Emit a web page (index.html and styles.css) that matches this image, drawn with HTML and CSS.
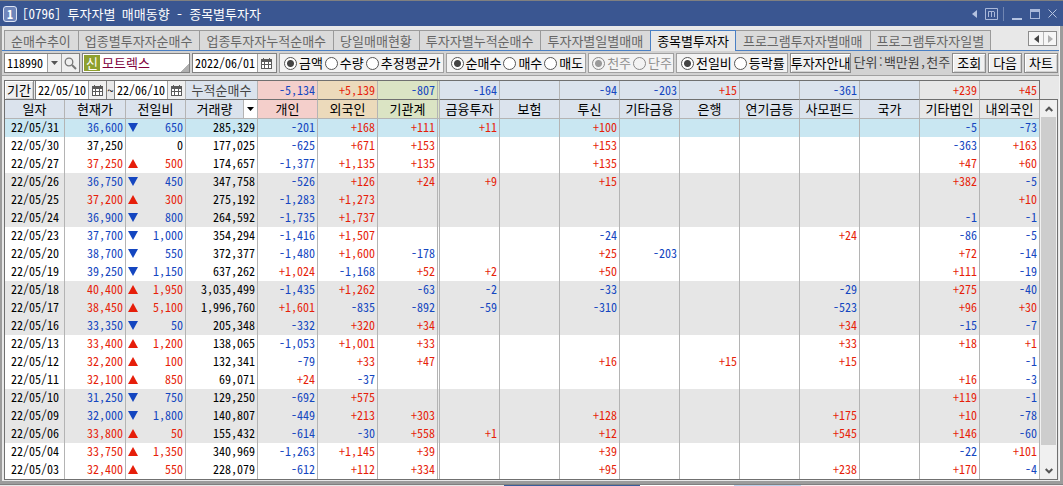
FILE: index.html
```html
<!DOCTYPE html>
<html lang="ko">
<head>
<meta charset="utf-8">
<title>[0796] 투자자별 매매동향</title>
<link rel="stylesheet" href="styles.css">
</head>
<body>
<svg class="defs" aria-hidden="true">
  <symbol id="calendar" viewBox="0 0 11 11"><path fill="#5a5a5a" d="M0 1h11v10H0z"/><path fill="#fff" d="M1 4h2v2H1zM4 4h3v2H4zM8 4h2v2H8zM1 7h2v3H1zM4 7h3v3H4zM8 7h2v3H8z"/><path fill="#5a5a5a" d="M2 0h1v1H2zM8 0h1v1H8z"/></symbol>
</svg>
<div class="window">
  <header class="titlebar">
    <span class="badge">1</span>
    <h1 class="title">[0796] 투자자별 매매동향 - 종목별투자자</h1>
    <div class="window-controls">
      <button class="wbtn" aria-label="이전"><svg width="5" height="8" viewBox="0 0 5 8"><path fill="#b5c3e0" d="M5 0v8L0 4z"/></svg></button>
      <button class="wbtn" aria-label="메뉴"><svg width="13" height="12" viewBox="0 0 13 12" fill="none" stroke="#a9b8da"><path d="M.5.5h12v11H.5zM3.500 9V3.500h5.500l.5.500v5M6.500 4v5"/></svg></button>
      <span class="wsep"></span>
      <button class="wbtn" aria-label="최소화"><svg width="10" height="12" viewBox="0 0 10 12"><path fill="#b5c3e0" d="M0 10h10v2H0z"/></svg></button>
      <button class="wbtn" aria-label="최대화"><svg width="10" height="10" viewBox="0 0 10 10"><path fill="#a9b8da" d="M0 0h10v10H0zM1 3v6h8V3z" fill-rule="evenodd"/></svg></button>
      <button class="wbtn" aria-label="닫기"><svg width="9" height="9" viewBox="0 0 9 9"><path stroke="#b5c3e0" d="M.5.5l8 8M8.500.5l-8 8"/></svg></button>
    </div>
  </header>
  <main class="content">
    <nav class="tabs">
      <button class="tab">순매수추이</button><button class="tab">업종별투자자순매수</button><button class="tab">업종투자자누적순매수</button><button class="tab">당일매매현황</button><button class="tab">투자자별누적순매수</button><button class="tab">투자자별일별매매</button><button class="tab tab-active">종목별투자자</button><button class="tab">프로그램투자자별매매</button><button class="tab">프로그램투자자일별</button>
      <div class="tab-scroll">
        <button class="scroll-btn" aria-label="왼쪽"><svg width="5" height="8" viewBox="0 0 5 8"><path fill="#444" d="M5 0v8L0 4z"/></svg></button>
        <button class="scroll-btn" aria-label="오른쪽"><svg width="5" height="8" viewBox="0 0 5 8"><path fill="#b0b0b0" d="M0 0v8l5-4z"/></svg></button>
      </div>
    </nav>
    <section class="toolbar">
      <div class="field">
        <input class="text code" value="118990" aria-label="종목코드">
        <button class="icon-btn drop" aria-label="목록"><svg width="7" height="4" viewBox="0 0 7 4"><path fill="#555" d="M0 0h7L3.500 4z"/></svg></button>
        <button class="icon-btn find" aria-label="검색"><svg width="13" height="13" viewBox="0 0 13 13" fill="none" stroke="#777"><circle cx="5" cy="5" r="3.800" stroke-width="1.300"/><path stroke-width="2" d="M8 8l4 4"/></svg></button>
      </div>
      <div class="field stock">
        <span class="mark">신</span>
        <input class="text name" value="모트렉스" aria-label="종목명">
      </div>
      <div class="field">
        <input class="text date" value="2022/06/01" aria-label="기준일">
        <button class="icon-btn cal" aria-label="달력"><svg width="11" height="11"><use href="#calendar"/></svg></button>
      </div>
      <fieldset class="group">
        <label><input type="radio" name="unit" checked>금액</label><label><input type="radio" name="unit">수량</label><label><input type="radio" name="unit">추정평균가</label>
      </fieldset>
      <fieldset class="group">
        <label><input type="radio" name="side" checked>순매수</label><label><input type="radio" name="side">매수</label><label><input type="radio" name="side">매도</label>
      </fieldset>
      <fieldset class="group group-lot" disabled>
        <label><input type="radio" name="lot" checked>천주</label><label><input type="radio" name="lot">단주</label>
      </fieldset>
      <fieldset class="group">
        <label><input type="radio" name="diff" checked>전일비</label><label><input type="radio" name="diff">등락률</label>
      </fieldset>
      <button class="btn guide">투자자안내</button>
      <span class="unit">단위:백만원,천주</span>
      <button class="btn">조회</button>
      <button class="btn">다음</button>
      <button class="btn">차트</button>
    </section>
    <section class="grid">
      <table class="table">
        <colgroup><col class="c-date"><col class="c-price"><col class="c-diff"><col class="c-volume"><col><col><col class="c-inst"><col><col><col><col><col><col><col><col><col><col></colgroup>
        <thead>
          <tr class="summary">
            <td colspan="3" class="period-cell">
              <div class="period">
                <button class="btn range">기간</button>
                <div class="field"><input class="text short" value="22/05/10" aria-label="시작일"><button class="icon-btn cal" aria-label="달력"><svg width="11" height="11"><use href="#calendar"/></svg></button></div>
                <span class="tilde">~</span>
                <div class="field"><input class="text short" value="22/06/10" aria-label="종료일"><button class="icon-btn cal" aria-label="달력"><svg width="11" height="11"><use href="#calendar"/></svg></button></div>
              </div>
            </td>
            <th class="total" scope="row">누적순매수</th>
            <td class="person down">-5,134</td><td class="foreign up">+5,139</td><td class="inst down">-807</td><td class="down">-164</td><td></td><td class="down">-94</td><td class="down">-203</td><td class="up">+15</td><td></td><td class="down">-361</td><td></td><td class="other up">+239</td><td class="other last up">+45</td>
          </tr>
          <tr class="heads">
            <th>일자</th><th>현재가</th><th>전일비</th>
            <th><div class="volume-head"><span>거래량</span><button class="sort" aria-label="정렬"><svg width="7" height="4" viewBox="0 0 7 4"><path d="M0 0h7L3.500 4z"/></svg></button></div></th>
            <th class="person">개인</th><th class="foreign">외국인</th><th class="inst">기관계</th><th>금융투자</th><th>보험</th><th>투신</th><th>기타금융</th><th>은행</th><th>연기금등</th><th>사모펀드</th><th>국가</th><th class="other">기타법인</th><th class="other">내외국인</th>
          </tr>
        </thead>
        <tbody id="rows"></tbody>
      </table>
      <div class="scrollbar">
        <button class="arrow" aria-label="위로"><svg width="8" height="6" viewBox="0 0 8 6" fill="none" stroke="#555" stroke-width="2"><path d="M.7 5L4 1.700 7.300 5"/></svg></button>
        <div class="track"><div class="thumb"></div></div>
        <button class="arrow" aria-label="아래로"><svg width="8" height="6" viewBox="0 0 8 6" fill="none" stroke="#555" stroke-width="2"><path d="M.7 1L4 4.300 7.300 1"/></svg></button>
      </div>
    </section>
  </main>
  <div class="frame-bottom"></div>
  <div class="behind"><i class="b-plain"></i><i class="b-blue"></i><i class="b-white"></i><i class="b-sky"></i><i class="b-pink"></i></div>
</div>
<script src="app.js"></script>
</body>
</html>
```
FILE: styles.css
```css
* { box-sizing: border-box; }
body, button, input {
  font-family: "Noto Sans Mono CJK KR", "Noto Sans CJK KR", monospace;
  font-size: 13px;
  line-height: 18px;
  color: #000;
}
body { margin: 0; background: #9c9c9c; }
button { margin: 0; padding: 0; border: 0; background: none; white-space: nowrap; }
svg { display: block; }
.defs { position: absolute; width: 0; height: 0; }

.titlebar { display: flex; align-items: center; height: 26px; padding: 0 6px 0 3px; border-top: 1px solid #808080; background: #3a5691; color: #fff; }
.badge { width: 14px; height: 16px; border: 1px solid #dde4f4; border-radius: 3px; background: #6f86bb; font-size: 12px; font-weight: 700; line-height: 14px; text-align: center; }
.title { flex: 1; margin: 0; padding-left: 5px; font-size: 13px; font-weight: 400; white-space: nowrap; }
.window-controls { display: flex; align-items: center; gap: 8px; }
.wsep { width: 1px; height: 14px; margin-left: -3px; background: #7186b2; }

.content { margin: 0 3px 0 2px; border-right: 1px solid #f4f4f4; background: #e8e8e8; }
.tabs { display: flex; align-items: flex-end; height: 25px; padding: 4px 2px 0; border-bottom: 1px solid #4a80c4; }
.tab { height: 20px; padding: 0 7px 0 6px; border: solid #9a9a9a; border-width: 1px 0 0 1px; background: #dadada; color: #666; }
.tab:nth-last-child(2) { border-right-width: 1px; padding-right: 6px; }
.tab-active { height: 21px; margin-bottom: -1px; border-color: #4a80c4; border-right: 1px solid #4a80c4; padding-right: 6px; background: #e8e8e8; color: #000; }
.tab-active + .tab { border-left-width: 0; padding-left: 7px; }
.tab-scroll { display: flex; align-self: flex-start; margin: 1px 0 0 auto; border: 1px solid #8c8c8c; background: #f6f6f6; }
.scroll-btn { display: flex; align-items: center; justify-content: center; width: 14px; height: 13px; }
.scroll-btn + .scroll-btn { width: 13px; border-left: 1px solid #b8b8b8; }

.toolbar { display: flex; gap: 2px; height: 25px; padding: 2px 1px 3px 2px; border-bottom: 1px solid #a0a0a0; background: #d2d2d2; }
.field { display: flex; height: 20px; border: 1px solid #808080; background: #fff; }
.text { min-width: 0; height: 18px; padding: 0 2px; border: 0; background: #fff; font-size: 12px; }
.code { width: 42px; }
.date { width: 64px; }
.short { width: 52px; }
.name { width: 87px; color: #80003c; font-size: 13px; }
.icon-btn { display: flex; flex: none; align-items: center; justify-content: center; height: 18px; border-left: 1px solid #a0a0a0; background: #efefef; }
.drop { width: 14px; }
.find { width: 18px; }
.cal { width: 19px; }
.stock { align-items: center; width: 108px; padding-left: 1px; background: linear-gradient(135deg, transparent 50%, #b0b0b0 50%) right bottom / 8px 8px no-repeat, #fff; }
.stock .text { background: none; }
.mark { flex: none; width: 16px; height: 16px; background: #8fa02f; color: #fff; line-height: 16px; text-align: center; }
.group { display: flex; gap: 2px; height: 20px; min-width: 0; margin: 0; padding: 0 2px 0 4px; border: 1px solid #a0a0a0; background: #f3f3f3; white-space: nowrap; }
.group-lot { padding: 0 1px 0 3px; }
.group label { display: flex; align-items: center; gap: 2px; }
.group input { appearance: none; width: 13px; height: 13px; margin: 0; border: 1px solid #555; border-radius: 50%; background: #fff; }
.group input:checked { background: radial-gradient(circle, #444 3px, #fff 4px); }
.group:disabled { color: #909090; }
.group:disabled input { border-color: #888; background: #f3f3f3; }
.group:disabled input:checked { background: radial-gradient(circle, #999 3px, #f3f3f3 4px); }
.btn { height: 20px; padding: 0 4px; border: 1px solid #8c8c8c; background: #f0f0f0; box-shadow: inset 1px 1px #fff, inset -1px -1px #d0d0d0; }
.guide { padding: 0; }
.unit { flex: 1; color: #444; white-space: nowrap; text-align: center; }

.grid { display: flex; padding: 4px 1px 1px 2px; }
.table { flex: 1; min-width: 0; table-layout: fixed; border-collapse: separate; border-spacing: 0; border: solid #707070; border-width: 1px 0 1px 1px; background: #fff; }
.table col { width: 60px; }
.table .c-price { width: 61px; }
.table .c-volume { width: 72px; }
.table .c-inst { width: 62px; }
.table th, .table td { height: 18px; padding: 0 2px 0 0; border-right: 1px solid #b4b4b4; font-weight: 400; text-align: right; white-space: nowrap; }
.table td { font-size: 12px; line-height: 16px; vertical-align: top; }
.table th { padding: 0; line-height: 18px; text-align: center; }
.summary td, .summary th, .heads th { background: #dbe3ed; }
.table .summary td, .table .summary th { height: 19px; border-bottom: 1px solid #707070; }
.table .summary td { line-height: 18px; }
.table .heads th { height: 19px; border-bottom: 1px solid #b4b4b4; }
.table .summary .last { border-right-color: #707070; }
.table .total { color: #444; }
.table .person { background: #f4cfcb; }
.table .foreign { background: #ecdabb; }
.table .inst { background: #dbe4c4; }
.table .other { background: #e8e8e8; }
.table th:nth-child(7), .table tbody td:nth-child(7), .table .summary .inst { border-right: 3px double #b4b4b4; }
.table .period-cell { padding: 0; background: #e8e8e8; }
.period { display: flex; height: 18px; }
.period .field, .period .btn { height: 18px; border-top: 0; border-bottom: 0; }
.period .btn { width: 29px; padding: 0; margin-right: 1px; border-left: 0; }
.period .cal { width: 18px; }
.period .field:last-child { border-right: 0; }
.tilde { flex: 1; text-align: center; }
.volume-head { display: flex; height: 18px; }
.volume-head span { flex: 1; }
.sort { display: flex; align-items: center; justify-content: center; width: 14px; border-left: 1px solid #b4b4b4; background: #fff; }
.table .day { padding: 0 5px 0 0; }
.shade td { background: #e6e6e6; }
.picked td { background: #c9e7f2; }
.up { color: #e61e0a; }
.down { color: #1446c0; }
.change { display: flex; align-items: flex-end; justify-content: space-between; padding-left: 2px; }
.change svg { margin-bottom: 3px; }

.scrollbar { display: flex; flex-direction: column; width: 18px; margin-top: 19px; border: 1px solid #707070; border-left: 0; background: #f0f0f0; padding: 0 1px; }
.arrow { display: flex; align-items: center; justify-content: center; height: 17px; }
.track { flex: 1; }
.thumb { height: 95%; background: #cdcdcd; }
.frame-bottom { height: 4px; border-bottom: 1px solid #808080; background: #9c9c9c; }
.behind { display: flex; height: 1px; }
.b-plain { width: 504px; background: #e8e8e8; }
.b-blue { width: 136px; background: #3a5e9c; }
.b-white { width: 94px; background: #fff; }
.b-sky { width: 67px; background: #b9cfea; }
.b-pink { flex: 1; background: #fbe9ee; }
```
FILE: app.js
```js
// date | price | change | volume | 개인,외국인,기관계,금융투자,보험,투신,기타금융,은행,연기금등,사모펀드,국가,기타법인,내외국인
const data = `
22/05/31|36,600|-650|285,329|-201;+168;+111;+11;;+100;;;;;;-5;-73
22/05/30|37,250|0|177,025|-625;+671;+153;;;+153;;;;;;-363;+163
22/05/27|37,250|+500|174,657|-1,377;+1,135;+135;;;+135;;;;;;+47;+60
22/05/26|36,750|-450|347,758|-526;+126;+24;+9;;+15;;;;;;+382;-5
22/05/25|37,200|+300|275,192|-1,283;+1,273;;;;;;;;;;;+10
22/05/24|36,900|-800|264,592|-1,735;+1,737;;;;;;;;;;-1;-1
22/05/23|37,700|-1,000|354,294|-1,416;+1,507;;;;-24;;;;+24;;-86;-5
22/05/20|38,700|-550|372,377|-1,480;+1,600;-178;;;+25;-203;;;;;+72;-14
22/05/19|39,250|-1,150|637,262|+1,024;-1,168;+52;+2;;+50;;;;;;+111;-19
22/05/18|40,400|+1,950|3,035,499|-1,435;+1,262;-63;-2;;-33;;;;-29;;+275;-40
22/05/17|38,450|+5,100|1,996,760|+1,601;-835;-892;-59;;-310;;;;-523;;+96;+30
22/05/16|33,350|-50|205,348|-332;+320;+34;;;;;;;+34;;-15;-7
22/05/13|33,400|+1,200|138,065|-1,053;+1,001;+33;;;;;;;+33;;+18;+1
22/05/12|32,200|+100|132,341|-79;+33;+47;;;+16;;+15;;+15;;;-1
22/05/11|32,100|+850|69,071|+24;-37;;;;;;;;;;+16;-3
22/05/10|31,250|-750|129,250|-692;+575;;;;;;;;;;+119;-1
22/05/09|32,000|-1,800|140,807|-449;+213;+303;;;+128;;;;+175;;+10;-78
22/05/06|33,800|+50|155,432|-614;-30;+558;+1;;+12;;;;+545;;+146;-60
22/05/04|33,750|+1,350|340,969|-1,263;+1,145;+39;;;+39;;;;;;-22;+101
22/05/03|32,400|+550|228,079|-612;+112;+334;;;+95;;;;+238;;+170;-4`;

const tone = (v) => (v[0] === "+" ? "up" : v[0] === "-" ? "down" : "");
const marks = { up: "M0 9L5 0l5 9z", down: "M0 0h10L5 9z" };

document.getElementById("rows").innerHTML = data.trim().split("\n").map((line, i) => {
  const [day, price, change, volume, flows] = line.split("|");
  const t = tone(change);
  const mark = t ? `<svg width="10" height="9" viewBox="0 0 10 9"><path fill="currentColor" d="${marks[t]}"/></svg>` : "<span></span>";
  const rowClass = i === 0 ? "picked" : Math.floor(i / 3) % 2 ? "shade" : "";
  const cells = flows.split(";").map((v) => `<td class="${tone(v)}">${v}</td>`).join("");
  return `<tr class="${rowClass}"><td class="day">${day}</td><td class="${t}">${price}</td>` +
    `<td class="${t}"><div class="change">${mark}<span>${change.replace(/^[+-]/, "")}</span></div></td>` +
    `<td>${volume}</td>${cells}</tr>`;
}).join("");
```
